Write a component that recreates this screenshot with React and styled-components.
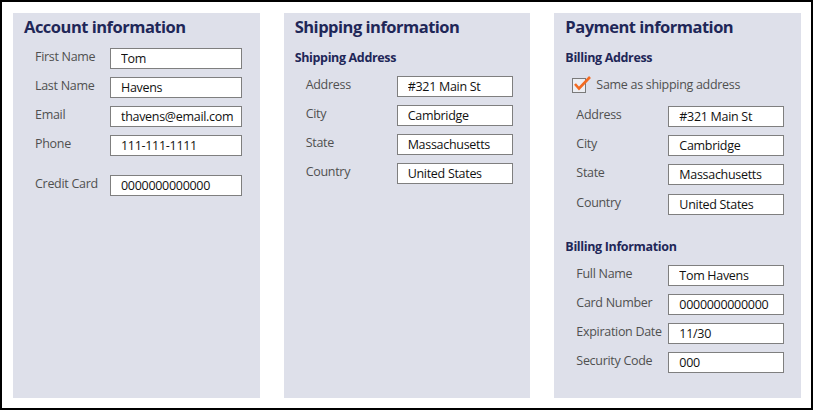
import styled, { createGlobalStyle } from "styled-components";

const GlobalStyle = createGlobalStyle`
  html, body {
    margin: 0;
    padding: 0;
    background: #fff;
  }
  body {
    font-family: "Open Sans", "Liberation Sans", sans-serif;
  }
`;

const Frame = styled.div`
  box-sizing: border-box;
  width: 813px;
  height: 410px;
  border: 2px solid #000;
  padding: 11px 10px 10px 11px;
  display: flex;
  gap: 24px;
`;

const Panel = styled.section`
  flex: 1;
  background: #dee0ea;
  padding: 3px 11px 0 11px;
  display: flex;
  flex-direction: column;
`;

const Title = styled.h2`
  margin: 0 0 10px;
  font-size: 16.5px;
  line-height: 22px;
  font-weight: 700;
  color: #1f2758;
  letter-spacing: -0.5px;
`;

const SubTitle = styled.h3`
  margin: ${(p) => (p.$before || 0) + 1}px 0 9px;
  font-size: 12.5px;
  line-height: 18px;
  font-weight: 700;
  color: #1f2758;
  letter-spacing: -0.35px;
`;

const Fields = styled.div`
  display: flex;
  flex-direction: column;
  gap: 8px;
  padding-left: 11px;
`;

const Row = styled.div`
  display: grid;
  grid-template-columns: ${(p) => p.$labelWidth}px ${(p) => p.$inputWidth}px;
  align-items: start;
  margin-top: ${(p) => p.$extra || 0}px;
`;

const Label = styled.label`
  font-size: 12.5px;
  line-height: 18px;
  color: #505050;
  white-space: nowrap;
  letter-spacing: -0.3px;
`;

const Input = styled.input`
  box-sizing: border-box;
  height: 21px;
  width: 100%;
  margin: 0;
  border: 1px solid #7f7f7f;
  background: #fff;
  padding: 0 0 0 10px;
  font-family: "Open Sans", "Liberation Sans", sans-serif;
  font-size: 12.5px;
  line-height: 19px;
  color: #111;
  letter-spacing: -0.3px;
  outline: none;
`;

const CheckRow = styled.div`
  display: flex;
  align-items: center;
  gap: 10px;
  padding-left: 7px;
  margin: 1px 0 13px;
  height: 16px;
`;

const Box = styled.span`
  position: relative;
  box-sizing: border-box;
  width: 14px;
  height: 15px;
  border: 1px solid #7a7a7a;
  background: #eceef3;
  flex: none;
`;

const Tick = styled.svg`
  position: absolute;
  left: 0px;
  top: -4px;
  overflow: visible;
`;

const CheckText = styled.span`
  font-size: 12.5px;
  line-height: 18px;
  color: #505050;
  letter-spacing: -0.3px;
`;

function Field({ label, value, labelWidth, inputWidth, extra }) {
  return (
    <Row $labelWidth={labelWidth} $inputWidth={inputWidth} $extra={extra}>
      <Label>{label}</Label>
      <Input readOnly value={value} />
    </Row>
  );
}

const account = [
  ["First Name", "Tom"],
  ["Last Name", "Havens"],
  ["Email", "thavens@email.com"],
  ["Phone", "111-111-1111"],
];

const address = [
  ["Address", "#321 Main St"],
  ["City", "Cambridge"],
  ["State", "Massachusetts"],
  ["Country", "United States"],
];

const billing = [
  ["Full Name", "Tom Havens"],
  ["Card Number", "0000000000000"],
  ["Expiration Date", "11/30"],
  ["Security Code", "000"],
];

export default function App() {
  return (
    <>
      <GlobalStyle />
      <Frame>
        <Panel>
          <Title>Account information</Title>
          <Fields>
            {account.map(([l, v]) => (
              <Field key={l} label={l} value={v} labelWidth={75} inputWidth={132} />
            ))}
            <Field label="Credit Card" value="0000000000000" labelWidth={75} inputWidth={132} extra={11} />
          </Fields>
        </Panel>

        <Panel>
          <Title>Shipping information</Title>
          <SubTitle>Shipping Address</SubTitle>
          <Fields>
            {address.map(([l, v]) => (
              <Field key={l} label={l} value={v} labelWidth={91} inputWidth={116} />
            ))}
          </Fields>
        </Panel>

        <Panel>
          <Title>Payment information</Title>
          <SubTitle>Billing Address</SubTitle>
          <CheckRow>
            <Box>
              <Tick width="18" height="16" viewBox="0 0 18 16">
                <path d="M2 9 L6 13.5 L17 2" fill="none" stroke="#f26a21" strokeWidth="2.6" />
              </Tick>
            </Box>
            <CheckText>Same as shipping address</CheckText>
          </CheckRow>
          <Fields>
            {address.map(([l, v]) => (
              <Field key={l} label={l} value={v} labelWidth={92} inputWidth={116} extra={l === "Country" ? 1 : 0} />
            ))}
          </Fields>
          <SubTitle $before={22}>Billing Information</SubTitle>
          <Fields>
            {billing.map(([l, v]) => (
              <Field key={l} label={l} value={v} labelWidth={92} inputWidth={116} />
            ))}
          </Fields>
        </Panel>
      </Frame>
    </>
  );
}
